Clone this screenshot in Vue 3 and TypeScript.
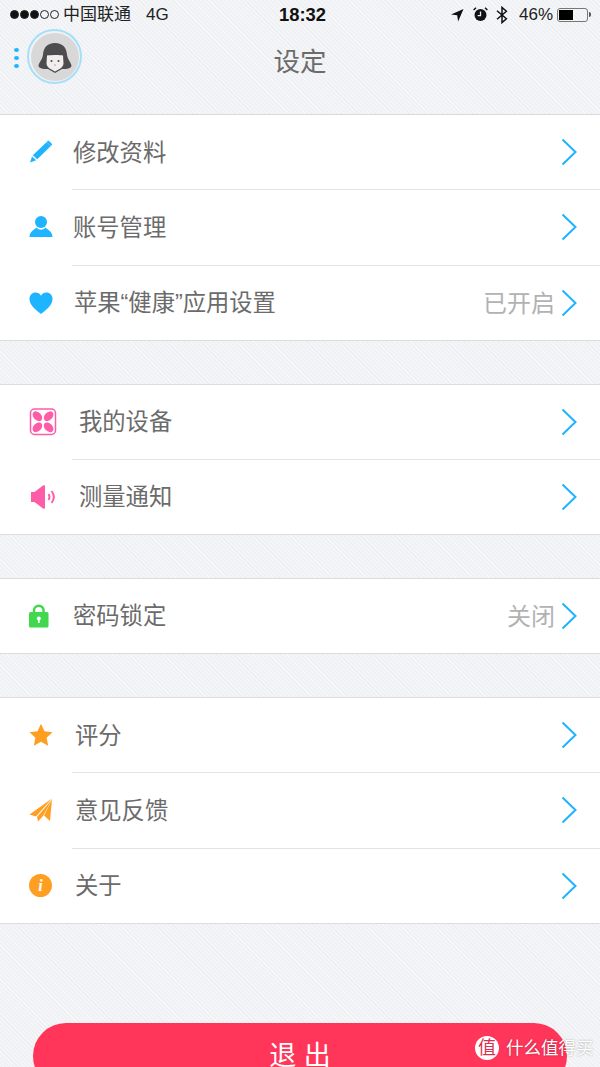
<script setup lang="ts">
type Row = { label: string; icon: string; value?: string; indent: number }

const groups: Row[][] = [
  [
    { label: '修改资料', icon: 'pencil', indent: 1 },
    { label: '账号管理', icon: 'user', indent: 1 },
    { label: '苹果“健康”应用设置', icon: 'heart', value: '已开启', indent: 2 },
  ],
  [
    { label: '我的设备', icon: 'device', indent: 7 },
    { label: '测量通知', icon: 'speaker', indent: 7 },
  ],
  [{ label: '密码锁定', icon: 'lock', value: '关闭', indent: 1 }],
  [
    { label: '评分', icon: 'star', indent: 3 },
    { label: '意见反馈', icon: 'plane', indent: 3 },
    { label: '关于', icon: 'info', indent: 3 },
  ],
]
</script>

<template>
  <div class="page">
    <div class="status">
      <div class="status-left">
        <span class="signal">
          <i v-for="n in 3" :key="n" class="on"></i>
          <i v-for="n in 2" :key="n" class="off"></i>
        </span>
        <span class="carrier">中国联通</span>
        <span class="net">4G</span>
      </div>
      <div class="clock">18:32</div>
      <div class="status-right">
        <svg width="14" height="14" viewBox="0 0 14 14"><path d="M13.5 1 1 6.4l6.2 .8.9 6.3z" fill="#111" /></svg>
        <svg class="alarm" width="15" height="15" viewBox="0 0 15 15">
          <circle cx="7.5" cy="8" r="6" fill="#111" />
          <path d="M7.5 4.5V8.6H4.6" fill="none" stroke="#eee" stroke-width="1.3" />
          <path d="M.6 3 3 .8M14.4 3 12 .8" stroke="#111" stroke-width="1.5" />
        </svg>
        <svg class="bt" width="12" height="18" viewBox="0 0 12 18">
          <path d="M1 4.800 10.400 12.800 6 16.600V1.400L10.400 5.200 1 13.200" fill="none" stroke="#111" stroke-width="1.500" />
        </svg>
        <span class="pct">46%</span>
        <span class="battery"><b></b></span>
        <span class="nub"></span>
      </div>
    </div>

    <header class="nav">
      <div class="nav-left">
        <span class="dots"><i></i><i></i><i></i></span>
        <span class="avatar">
          <svg width="48" height="48" viewBox="0 0 48 48">
            <circle cx="24" cy="24" r="24" fill="#d8d8d8" />
            <path d="M24 10c-8 0-11.500 5-12 11.500-.3 4.500-3.500 7-4.500 11 0 1.500 1 2.200 2.500 2.700 2 .7 4.500 .8 7 .8L24 40l7-4c2.500 0 5-.1 7-.8 1.500-.5 2.500-1.200 2.500-2.700-1-4-4.200-6.500-4.500-11C35.500 15 32 10 24 10z" fill="#4d4d50" />
            <path d="M16 22.500c4-.5 12-1 16 0l.5 8c0 2.500-2 4.500-4.500 5.800L24 38.500 20 36.300c-2.500-1.300-4.500-3.300-4.500-5.800z" fill="#f3eeee" />
            <circle cx="20.500" cy="28" r="1" fill="#444" />
            <circle cx="27.500" cy="28" r="1" fill="#444" />
            <path d="M23 32h2" stroke="#c88" stroke-width=".8" />
          </svg>
        </span>
      </div>
      <h1 class="title">设定</h1>
    </header>

    <section v-for="(group, g) in groups" :key="g" class="group" :class="{ long: group.length === 3 }">
      <div v-for="row in group" :key="row.label" class="row">
        <span class="icon">
          <svg v-if="row.icon === 'pencil'" width="24" height="24" viewBox="0 0 24 24">
            <path d="M17.500 2.200 21.800 6 8.300 19.300 3.800 15.300z" fill="#1eb4ff" />
            <path d="M18.400 1.200c.7-.6 1.300-.6 1.900 0l2.300 2.200c.6 .6 .6 1.200 0 1.800l-.9 .8-4.200-4z" fill="#1eb4ff" />
            <path d="M3 16.500 7.200 20.300 1 22.500z" fill="#1eb4ff" />
          </svg>
          <svg v-else-if="row.icon === 'user'" width="24" height="24" viewBox="0 0 24 24">
            <circle cx="12" cy="7" r="6" fill="#1eb4ff" />
            <path d="M7.500 12.500C5 15 1 16 .5 21.500c0 .4 .2 .5 .5 .5h22c.3 0 .5-.1 .5-.5C23 16 19 15 16.500 12.500c-2.500 3-6.500 3-9 0z" fill="#1eb4ff" />
          </svg>
          <svg v-else-if="row.icon === 'heart'" width="24" height="24" viewBox="0 0 24 24">
            <path d="M12 23C6 18 .5 14 .5 8 .5 4 3.300 1.500 6.500 1.500c2.500 0 4.300 1.200 5.500 3.200 1.200-2 3-3.200 5.500-3.200 3.200 0 6 2.500 6 6.500 0 6-5.500 10-11.500 15z" fill="#1eb4ff" />
          </svg>
          <svg v-else-if="row.icon === 'device'" width="28" height="28" viewBox="0 0 28 28">
            <rect x="1.500" y="1" width="25" height="25.500" rx="4" fill="none" stroke="#ff5ca8" stroke-width="1.500" />
            <g fill="#ff5ca8">
              <ellipse cx="8.400" cy="8.200" rx="5.600" ry="3.900" transform="rotate(45 8.400 8.200)" />
              <ellipse cx="19.600" cy="8.200" rx="5.600" ry="3.900" transform="rotate(-45 19.600 8.200)" />
              <ellipse cx="8.400" cy="19.300" rx="5.600" ry="3.900" transform="rotate(-45 8.400 19.300)" />
              <ellipse cx="19.600" cy="19.300" rx="5.600" ry="3.900" transform="rotate(45 19.600 19.300)" />
            </g>
          </svg>
          <svg v-else-if="row.icon === 'speaker'" width="27" height="26" viewBox="0 0 27 26">
            <path d="M2 8h3.500L14 1.500c.8-.5 2-.2 2 .8v21.400c0 1-1.200 1.300-2 .8L5.500 18H2z" fill="#ff5ca8" />
            <path d="M19.500 10c1.300 2 1.300 4 0 6M22.500 7c3 3.800 3 8.200 0 12" fill="none" stroke="#ff5ca8" stroke-width="2" />
          </svg>
          <svg v-else-if="row.icon === 'lock'" width="20" height="24" viewBox="0 0 20 24">
            <path d="M5 9V6.500a4.800 4.800 0 0 1 9.600 0V9" fill="none" stroke="#41d84f" stroke-width="2.500" />
            <rect x="0" y="8" width="19.500" height="15.500" rx="1.500" fill="#41d84f" />
            <circle cx="9.800" cy="14.500" r="2" fill="#fff" />
            <rect x="9" y="14.500" width="1.600" height="4.500" fill="#fff" />
          </svg>
          <svg v-else-if="row.icon === 'star'" width="24" height="24" viewBox="0 0 24 24">
            <path d="M12 .8 15.500 8.300 23.500 9.300 17.600 14.800 19.200 22.800 12 18.800 4.800 22.800 6.400 14.800 .5 9.300 8.500 8.300z" fill="#ff9f22" />
          </svg>
          <svg v-else-if="row.icon === 'plane'" width="24" height="24" viewBox="0 0 24 24">
            <path d="M23 .5 .5 16.500l6.500 2z" fill="#ff9f22" />
            <path d="M23 1.500 8 19 9 23.500l5-5.500z" fill="#ff9f22" />
            <path d="M23 1.500 15 17.500l6 5.500z" fill="#ff9f22" />
          </svg>
          <span v-else-if="row.icon === 'info'" class="info">i</span>
        </span>
        <div class="body">
          <span class="label" :style="{ paddingLeft: row.indent + 'px' }">{{ row.label }}</span>
          <span v-if="row.value" class="value">{{ row.value }}</span>
          <svg class="chevron" width="16" height="28" viewBox="0 0 16 28">
            <path d="M1.500 1.500 14.500 14 1.500 26.500" fill="none" stroke="#1eb4ff" stroke-width="2" />
          </svg>
        </div>
      </div>
    </section>

    <div class="footer">
      <button class="logout">退 出</button>
    </div>

    <div class="mark">
      <span class="mark-badge">值</span>
      <span class="mark-text">什么值得买</span>
    </div>
  </div>
</template>

<style>
html,
body {
  margin: 0;
  height: 1067px;
  overflow: hidden;
}
</style>

<style scoped>
.page {
  position: relative;
  width: 600px;
  height: 1067px;
  overflow: hidden;
  font-family: "Liberation Sans", "Noto Sans CJK SC", sans-serif;
  background-color: #f1f2f5;
  background-image: repeating-linear-gradient(45deg, #eff0f3 0, #eff0f3 1.5px, #f5f6f8 1.5px, #f5f6f8 3px);
}

.status {
  height: 29px;
  display: grid;
  grid-template-columns: 1fr auto 1fr;
  align-items: center;
  padding: 0 9px 0 10px;
  box-sizing: border-box;
  font-size: 17px;
  color: #222;
}

.status-left {
  display: flex;
  align-items: center;
}

.signal {
  display: flex;
  gap: 1px;
  margin-right: 4px;
}

.signal i {
  width: 9px;
  height: 9px;
  border-radius: 50%;
  box-sizing: border-box;
  border: 1px solid #222;
}

.signal .on {
  background: #111;
}

.carrier {
  font-size: 17px;
  line-height: 20px;
}

.net {
  margin-left: 15px;
}

.clock {
  font-weight: 700;
  font-size: 18.4px;
  color: #111;
  padding-left: 4px;
}

.status-right {
  display: flex;
  align-items: center;
  justify-content: flex-end;
}

.alarm {
  margin-left: 9px;
}

.bt {
  margin-left: 8px;
}

.pct {
  margin-left: 11px;
}

.battery {
  width: 31px;
  height: 14px;
  margin-left: 4px;
  padding: 1px;
  box-sizing: border-box;
  border: 1px solid #777;
  border-radius: 3px;
  display: flex;
}

.battery b {
  width: 14px;
  background: #000;
}

.nub {
  width: 2px;
  height: 5px;
  margin-left: 1px;
  background: #555;
  border-radius: 0 2px 2px 0;
}

.nav {
  height: 86px;
  display: grid;
  grid-template-columns: 1fr auto 1fr;
  align-items: start;
  border-bottom: 1px solid #d8d9dc;
  box-sizing: border-box;
}

.nav-left {
  display: flex;
  align-items: center;
  padding-left: 14px;
}

.dots {
  display: flex;
  flex-direction: column;
  gap: 4px;
  margin-right: 8px;
  margin-top: 3px;
}

.dots i {
  width: 5px;
  height: 4px;
  border-radius: 50%;
  background: #1eb4ff;
}

.avatar {
  width: 55px;
  height: 55px;
  box-sizing: border-box;
  border: 2.5px solid #a6e0f8;
  border-radius: 50%;
  display: flex;
  align-items: center;
  justify-content: center;
  background: #f1f2f5;
}

.title {
  margin: 14px 0 0;
  font-size: 26.5px;
  line-height: 38px;
  font-weight: 400;
  color: #6b6b6b;
}

.group {
  background: #fff;
  border-bottom: 1px solid #dcdcdf;
  margin-bottom: 43px;
}

.group + .group {
  border-top: 1px solid #dcdcdf;
}

.row {
  height: 74px;
  display: flex;
  align-items: stretch;
}

.long .row {
  height: 74.33px;
}

.row + .row {
  margin-top: 1px;
}

.icon {
  width: 72px;
  padding-left: 29px;
  box-sizing: border-box;
  display: flex;
  align-items: center;
}

.body {
  flex: 1;
  display: flex;
  align-items: center;
  padding-right: 23px;
}

.row:not(:last-child) .body {
  box-shadow: 0 1px 0 #e3e3e5;
}

.label {
  flex: 1;
  font-size: 23.3px;
  color: #6b6b6b;
  padding-bottom: 3px;
}

.value {
  font-size: 24px;
  color: #b2b2b2;
  margin-right: 6px;
  padding-bottom: 3px;
}

.info {
  width: 23px;
  height: 23px;
  border-radius: 50%;
  background: #ff9f22;
  color: #fff;
  font: italic 700 16px/23px "Liberation Serif", serif;
  text-align: center;
}

.footer {
  margin-top: 99px;
  padding: 0 33px;
}

.logout {
  display: block;
  width: 100%;
  height: 66px;
  border: none;
  border-radius: 33px;
  background: #ff355a;
  color: #fff;
  font-family: inherit;
  font-size: 27px;
  line-height: 66px;
  padding: 0;
}

.mark {
  position: absolute;
  left: 475px;
  top: 1036px;
  display: flex;
  align-items: center;
  gap: 7px;
}

.mark-badge {
  width: 24px;
  height: 24px;
  border-radius: 50%;
  background: #fff;
  color: #d8304e;
  font-size: 18px;
  line-height: 24px;
  text-align: center;
}

.mark-text {
  font-size: 17.5px;
  line-height: 24px;
  color: #fff;
  text-shadow: 0 0 2px rgba(0, 0, 0, 0.35);
}
</style>
